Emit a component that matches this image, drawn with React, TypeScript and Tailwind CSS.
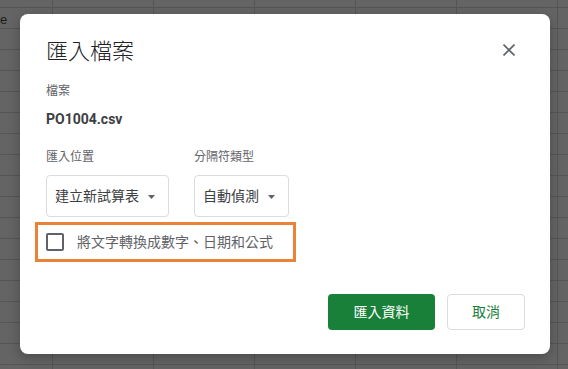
import { useState } from "react"

const font = "font-['Roboto','Noto_Sans_CJK_TC',sans-serif]"

function SelectBox({ value }: { value: string }) {
  return (
    <div className="flex h-[42px] items-center gap-[9px] rounded-[4px] border border-[#dadce0] pl-[8px] pr-[13px] text-[14px] text-[#3c4043]">
      <span>{value}</span>
      <svg width="7" height="4" viewBox="0 0 7 4" className="mt-[1px]">
        <path d="M0 0 L7 0 L3.5 4 Z" fill="#5f6368" />
      </svg>
    </div>
  )
}

export default function App() {
  const [checked, setChecked] = useState(false)

  return (
    <div
      className={`relative h-[369px] w-[568px] overflow-hidden bg-[#636463] bg-[linear-gradient(to_right,#545554_1px,transparent_1px),linear-gradient(to_bottom,#545554_1px,transparent_1px)] bg-[size:101px_21px] bg-[position:52px_7px] ${font}`}
    >
      {/* spreadsheet text peeking out behind the overlay */}
      <span className="absolute left-0 top-[10px] font-['Liberation_Sans',sans-serif] text-[13px] text-[#1c1c1c]">e</span>

      <div className="absolute left-[20px] top-[14px] flex h-[340px] w-[530px] flex-col rounded-lg bg-white shadow-[0_4px_12px_rgba(0,0,0,0.25)]">
        <div className="flex items-center justify-between pl-[26px] pr-[29px] pt-[24px]">
          <h2 className="h-[28px] text-[22px] font-light leading-[28px] text-[#202124]">匯入檔案</h2>
          <button className="-mt-[4px] flex h-[24px] w-[24px] items-center justify-center">
            <svg width="12" height="12" viewBox="0 0 12 12">
              <path d="M0.5 0.5 L11.5 11.5 M11.5 0.5 L0.5 11.5" stroke="#5f6368" strokeWidth="1.6" />
            </svg>
          </button>
        </div>

        <div className="flex flex-col pl-[26px]">
          <div className="mt-[17px] text-[12px] leading-[16px] text-[#5f6368]">檔案</div>
          <div className="mt-[10px] text-[14px] font-bold leading-[20px] text-[#3c4043]">PO1004.csv</div>

          <div className="mt-[20px] flex gap-[25px]">
            <div className="flex flex-col gap-[10px]">
              <span className="text-[12px] leading-[16px] text-[#5f6368]">匯入位置</span>
              <SelectBox value="建立新試算表" />
            </div>
            <div className="flex flex-col gap-[10px]">
              <span className="text-[12px] leading-[16px] text-[#5f6368]">分隔符類型</span>
              <SelectBox value="自動偵測" />
            </div>
          </div>

          <label
            className="-ml-[11px] mt-[5px] flex h-[40px] w-[261px] cursor-pointer items-center gap-[13px] border-[3px] border-[#ea8237] pl-[8px]"
            onClick={() => setChecked(!checked)}
          >
            <span
              className={`h-[18px] w-[18px] rounded-[2px] border-2 ${checked ? "border-[#188038] bg-[#188038]" : "border-[#5f6368]"}`}
            />
            <span className="text-[14px] text-[#5f6368]">將文字轉換成數字、日期和公式</span>
          </label>
        </div>

        <div className="mt-auto flex justify-end gap-[12px] pb-[24px] pr-[25px]">
          <button className="h-[36px] w-[107px] rounded-[4px] bg-[#188038] text-[14px] font-normal text-white">
            匯入資料
          </button>
          <button className="h-[36px] w-[78px] rounded-[4px] border border-[#dadce0] bg-white text-[14px] font-normal text-[#188038]">
            取消
          </button>
        </div>
      </div>
    </div>
  )
}
